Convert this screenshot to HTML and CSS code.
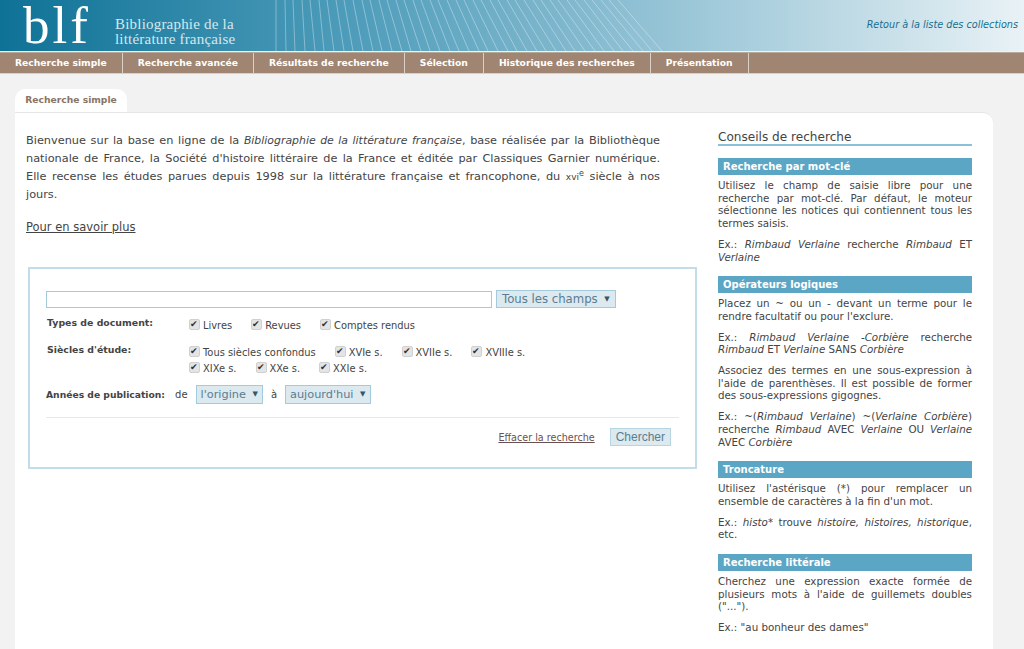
FILE: index.html
```html
<!DOCTYPE html>
<html lang="fr">
<head>
    <meta charset="UTF-8">
    <title>Bibliographie de la littérature française</title>
    <link rel="stylesheet" href="styles.css">
</head>
<body>
    <div class="header">
        <svg class="rays" width="420" height="51" viewBox="0 0 420 51">
            <g stroke="#fff" stroke-opacity="0.35" stroke-width="1">
                <path d="M1 0V51M10 0L11 51M18 0L20 51M27 0L30 51M35 0L40 51M44 0L49 51M52 0L59 51M61 0L69 51M69 0L78 51M78 0L88 51"/>
                <path d="M87 0L98 51M95 0L107 51M104 0L117 51M112 0L127 51M121 0L136 51M129 0L146 51M138 0L155 51M146 0L165 51M155 0L175 51M163 0L184 51"/>
                <path d="M172 0L194 51M181 0L204 51M189 0L213 51M198 0L223 51M206 0L233 51M215 0L242 51M223 0L252 51M232 0L262 51M240 0L271 51M249 0L281 51"/>
                <path d="M258 0L291 51M266 0L300 51M275 0L310 51M283 0L320 51M292 0L329 51M300 0L339 51M309 0L348 51M317 0L358 51M326 0L368 51M334 0L377 51M343 0L387 51"/>
            </g>
        </svg>
        <div class="logo">blf</div>
        <div class="logo-title">Bibliographie de la<br>littérature française</div>
        <a href="#" class="back-link">Retour à la liste des collections</a>
    </div>

    <div class="navigation">
        <a href="#" class="nav-item">Recherche simple</a>
        <a href="#" class="nav-item">Recherche avancée</a>
        <a href="#" class="nav-item">Résultats de recherche</a>
        <a href="#" class="nav-item">Sélection</a>
        <a href="#" class="nav-item">Historique des recherches</a>
        <a href="#" class="nav-item">Présentation</a>
    </div>

    <div class="page">
        <div class="tab">Recherche simple</div>
        <div class="panel">
            <div class="main">
                <p class="intro">
                    <span class="intro-line">Bienvenue sur la base en ligne de la <em>Bibliographie de la littérature française</em>, base réalisée par la Bibliothèque</span>
                    <span class="intro-line">nationale de France, la Société d'histoire littéraire de la France et éditée par Classiques Garnier numérique.</span>
                    <span class="intro-line">Elle recense les études parues depuis 1998 sur la littérature française et francophone, du <span class="century">xvi<sup>e</sup></span> siècle à nos</span>
                    jours.
                </p>
                <a href="#" class="more-link">Pour en savoir plus</a>

                <form class="search-box">
                    <div class="search-line">
                        <input type="text" class="search-input">
                        <div class="select select-large">Tous les champs <span class="arrow">▼</span></div>
                    </div>
                    <div class="form-row row-types">
                        <div class="form-label">Types de document:</div>
                        <div class="checks">
                            <label class="check"><input type="checkbox" checked>Livres</label>
                            <label class="check"><input type="checkbox" checked>Revues</label>
                            <label class="check"><input type="checkbox" checked>Comptes rendus</label>
                        </div>
                    </div>
                    <div class="form-row row-siecles">
                        <div class="form-label">Siècles d'étude:</div>
                        <div class="checks">
                            <label class="check"><input type="checkbox" checked>Tous siècles confondus</label>
                            <label class="check"><input type="checkbox" checked>XVIe s.</label>
                            <label class="check"><input type="checkbox" checked>XVIIe s.</label>
                            <label class="check"><input type="checkbox" checked>XVIIIe s.</label>
                            <label class="check"><input type="checkbox" checked>XIXe s.</label>
                            <label class="check"><input type="checkbox" checked>XXe s.</label>
                            <label class="check"><input type="checkbox" checked>XXIe s.</label>
                        </div>
                    </div>
                    <div class="years">
                        <span class="form-label">Années de publication:</span>
                        <span>de</span>
                        <div class="select">l'origine <span class="arrow">▼</span></div>
                        <span>à</span>
                        <div class="select">aujourd'hui <span class="arrow">▼</span></div>
                    </div>
                    <div class="actions">
                        <a href="#" class="clear-link">Effacer la recherche</a>
                        <button type="button" class="button">Chercher</button>
                    </div>
                </form>
            </div>

            <div class="sidebar">
                <h2>Conseils de recherche</h2>

                <h3>Recherche par mot-clé</h3>
                <p>Utilisez le champ de saisie libre pour une recherche par mot-clé. Par défaut, le moteur sélectionne les notices qui contiennent tous les termes saisis.</p>
                <p>Ex.: <em>Rimbaud Verlaine</em> recherche <em>Rimbaud</em> ET <em>Verlaine</em></p>

                <h3>Opérateurs logiques</h3>
                <p>Placez un ~ ou un - devant un terme pour le rendre facultatif ou pour l'exclure.</p>
                <p>Ex.: <em>Rimbaud Verlaine -Corbière</em> recherche <em>Rimbaud</em> ET <em>Verlaine</em> SANS <em>Corbière</em></p>
                <p>Associez des termes en une sous-expression à l'aide de parenthèses. Il est possible de former des sous-expressions gigognes.</p>
                <p>Ex.: ~(<em>Rimbaud Verlaine</em>) ~(<em>Verlaine Corbière</em>) recherche <em>Rimbaud</em> AVEC <em>Verlaine</em> OU <em>Verlaine</em> AVEC <em>Corbière</em></p>

                <h3>Troncature</h3>
                <p>Utilisez l'astérisque (*) pour remplacer un ensemble de caractères à la fin d'un mot.</p>
                <p>Ex.: <em>histo*</em> trouve <em>histoire, histoires, historique</em>, etc.</p>

                <h3>Recherche littérale</h3>
                <p>Cherchez une expression exacte formée de plusieurs mots à l'aide de guillemets doubles ("...").</p>
                <p>Ex.: "au bonheur des dames"</p>
            </div>
        </div>
    </div>
</body>
</html>
```

FILE: styles.css
```css
html, body {
    height: 649px;
    overflow: hidden;
}
body {
    font-family: "DejaVu Sans", Verdana, sans-serif;
    font-size: 11px;
    margin: 0;
    padding: 0;
    background-color: #f2f2f2;
    color: #444;
}
a {
    color: inherit;
}
.header {
    height: 51px;
    background: linear-gradient(90deg, #0e7296 0%, #4f9dbb 35%, #8fc0d3 62%, #c4dde7 85%, #e9f2f6 100%);
    display: flex;
    position: relative;
}
.rays {
    position: absolute;
    left: 275px;
    top: 0;
}
.logo {
    font-family: "Liberation Serif", serif;
    font-size: 53px;
    line-height: 51px;
    color: #fff;
    margin-left: 23px;
    width: 92px;
    letter-spacing: 3px;
}
.logo-title {
    font-family: "Liberation Serif", serif;
    font-size: 15px;
    line-height: 15px;
    letter-spacing: 0.2px;
    color: #d5e8ef;
    padding-top: 17px;
}
.back-link {
    margin-left: auto;
    margin-right: 6px;
    margin-top: 19px;
    font-size: 9.7px;
    font-style: italic;
    color: #17708f;
    text-decoration: none;
}
.navigation {
    height: 22px;
    background-color: #a08672;
    border-top: 1px solid #b9a999;
    border-bottom: 1px solid #d8d0c8;
    box-sizing: border-box;
    display: flex;
    margin-top: 1px;
}
.nav-item {
    padding: 0 15px;
    border-right: 1px solid #d9d0c8;
    line-height: 19px;
    font-size: 9.2px;
    font-weight: bold;
    color: #fff;
    text-decoration: none;
}
.page {
    padding: 15px 31px 0 15px;
}
.tab {
    width: 112px;
    height: 23px;
    box-sizing: border-box;
    background-color: #fff;
    border-radius: 10px 10px 0 0;
    text-align: center;
    line-height: 22px;
    font-size: 9.2px;
    font-weight: bold;
    color: #8a7565;
}
.panel {
    display: flex;
    background-color: #fff;
    border-top: 1px solid #e6e6e6;
    border-radius: 0 10px 0 0;
    height: 536px;
    padding: 0 21px 0 11px;
}
.main {
    width: 671px;
}
.intro {
    width: 634px;
    margin: 19px 0 0;
    font-size: 11.3px;
    line-height: 18px;
}
.intro-line {
    display: block;
    white-space: nowrap;
    text-align: justify;
    text-align-last: justify;
}
.intro em {
    font-size: 10.9px;
}
.century {
    font-size: 9px;
}
.century sup {
    font-size: 8px;
    line-height: 0;
}
.more-link {
    display: block;
    margin-top: 14px;
    font-size: 11.5px;
    line-height: 18px;
}
.search-box {
    width: 669px;
    height: 202px;
    box-sizing: border-box;
    margin: 31px 0 0 2px;
    padding: 21px 16px 0 16px;
    border: 2px solid #c3dde8;
}
.search-line {
    display: flex;
    align-items: center;
    gap: 4px;
}
.search-input {
    width: 446px;
    height: 17px;
    box-sizing: border-box;
    border: 1px solid #a4cbdc;
    margin: 0;
    padding: 0;
}
.select {
    display: inline-block;
    background-color: #dce9ef;
    border: 1px solid #a4cbdc;
    color: #5a7d92;
    font-size: 11.3px;
    line-height: 16px;
    padding: 0 4px;
}
.select-large {
    font-size: 11.7px;
    padding: 0 5px;
}
.arrow {
    font-size: 7px;
    color: #33566e;
    margin-left: 3px;
    vertical-align: 2px;
}
.form-row {
    display: flex;
}
.row-types {
    margin-top: 10px;
}
.row-siecles {
    margin-top: 11px;
}
.form-label {
    font-size: 9.4px;
    font-weight: bold;
    color: #444;
}
.form-row .form-label {
    width: 143px;
    padding-left: 1px;
    box-sizing: border-box;
    line-height: 10px;
}
.checks {
    max-width: 345px;
    display: flex;
    flex-wrap: wrap;
    column-gap: 19px;
    font-size: 9.9px;
    line-height: 16px;
}
.check {
    display: flex;
    align-items: center;
}
.check input {
    appearance: none;
    position: relative;
    box-sizing: border-box;
    margin: 0 3px 3px 0;
    width: 11px;
    height: 11px;
    background-color: #e4e4e4;
    border: 1px solid #d0d0d0;
    border-radius: 2px;
}
.check input::after {
    content: "✔";
    position: absolute;
    left: 0;
    top: -2px;
    font-size: 9px;
    line-height: 12px;
    color: #333;
}
.years {
    display: flex;
    align-items: center;
    gap: 8px;
    margin-top: 8px;
    font-size: 10px;
}
.years .form-label {
    font-size: 9.2px;
    margin-right: 2px;
}
.actions {
    display: flex;
    justify-content: flex-end;
    align-items: center;
    gap: 15px;
    border-top: 1px solid #e8e8e8;
    margin-top: 13px;
    padding: 10px 8px 0 0;
}
.clear-link {
    font-size: 9.6px;
    color: #6a5050;
}
.button {
    height: 18px;
    padding: 0 5px;
    background-color: #dce9ef;
    border: 1px solid #b5d5e2;
    font-family: "Liberation Sans", sans-serif;
    font-size: 12px;
    color: #5a7d92;
}
.sidebar {
    width: 254px;
    margin-left: 21px;
    font-size: 10.3px;
    line-height: 12.7px;
    text-align: justify;
}
.sidebar h2 {
    margin: 17px 0 12px;
    font-size: 12.1px;
    font-weight: normal;
    line-height: 14px;
    border-bottom: 2px solid #8cc0d8;
    text-align: left;
}
.sidebar h3 {
    margin: 0 0 4px;
    padding-left: 5px;
    background-color: #5ba6c4;
    color: #fff;
    font-size: 10px;
    line-height: 17px;
    text-align: left;
}
.sidebar p {
    margin: 0 0 8px;
}
.sidebar p + h3 {
    margin-top: 13px;
}
```
